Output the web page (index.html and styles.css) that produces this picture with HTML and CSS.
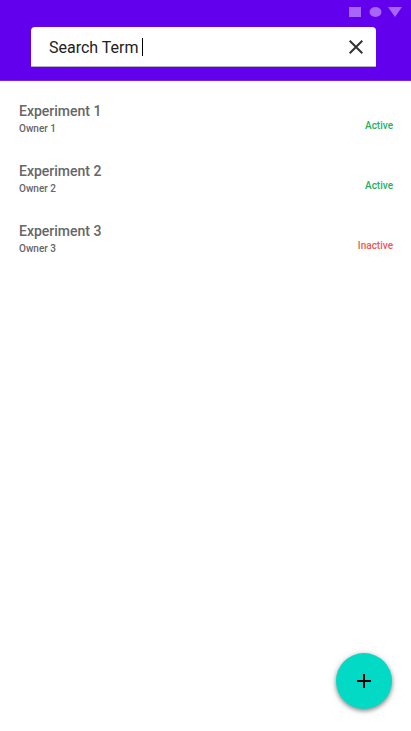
FILE: index.html
```html
<!DOCTYPE html>
<html lang="en">
<head>
<meta charset="utf-8">
<meta name="viewport" content="width=device-width, initial-scale=1">
<title>Experiments</title>
<link rel="stylesheet" href="styles.css">
</head>
<body>
<header class="app-bar">
  <div class="status-bar">
    <svg width="54" height="12" viewBox="0 0 54 12" fill="currentColor" aria-hidden="true">
      <path d="M0 1h12v10H0z"/>
      <ellipse cx="26.5" cy="6" rx="6" ry="5"/>
      <path d="M39 1h14l-7 10z"/>
    </svg>
  </div>
  <form class="search" role="search">
    <input class="search-input" type="text" value="Search Term" aria-label="Search experiments">
    <span class="caret"></span>
    <button class="clear" type="button" aria-label="Clear search">
      <svg width="14" height="14" viewBox="0 0 14 14" fill="none" stroke="currentColor" stroke-width="2" aria-hidden="true">
        <path d="M.7.7l12.6 12.6M13.3.7L.7 13.3"/>
      </svg>
    </button>
  </form>
</header>
<main>
  <ul class="list">
    <li class="item">
      <div><h2 class="title">Experiment 1</h2><p class="owner">Owner 1</p></div>
      <span class="status active">Active</span>
    </li>
    <li class="item">
      <div><h2 class="title">Experiment 2</h2><p class="owner">Owner 2</p></div>
      <span class="status active">Active</span>
    </li>
    <li class="item">
      <div><h2 class="title">Experiment 3</h2><p class="owner">Owner 3</p></div>
      <span class="status inactive">Inactive</span>
    </li>
  </ul>
</main>
<button class="fab" type="button" aria-label="Add experiment">
  <svg width="14" height="14" viewBox="0 0 14 14" fill="none" stroke="currentColor" stroke-width="2" aria-hidden="true">
    <path d="M7 0v14M0 7h14"/>
  </svg>
</button>
</body>
</html>
```
FILE: styles.css
```css
* {
  box-sizing: border-box;
}

body {
  margin: 0;
  background: #fff;
  font-family: Roboto, sans-serif;
}

.app-bar {
  padding-bottom: 13px;
  background: #6200ee;
  border-bottom: 1px solid #7822f0;
}

.status-bar {
  display: flex;
  align-items: center;
  justify-content: flex-end;
  height: 24px;
  padding-right: 8px;
  color: #a766f5;
}

.search {
  display: flex;
  align-items: center;
  height: 40px;
  margin: 3px 35px 0 31px;
  padding: 1px 12px 0 18px;
  background: #fff;
  border-bottom: 1px solid #b5b0bd;
  border-radius: 4px 4px 0 0;
}

.search-input {
  field-sizing: content;
  min-width: 0;
  padding: 2px 1px 0 0;
  border: 0;
  outline: 0;
  background: none;
  font: 400 16px/24px Roboto, sans-serif;
  color: #212121;
}

.caret {
  width: 1px;
  height: 18px;
  margin-left: 2px;
  background: #000;
}

.clear {
  display: flex;
  margin-left: auto;
  padding: 1px;
  border: 0;
  background: none;
  color: #333;
}

.list {
  margin: 0;
  padding: 0;
  list-style: none;
}

.item {
  display: flex;
  align-items: flex-end;
  justify-content: space-between;
  min-height: 60px;
  padding: 20px 18px 4px 19px;
}

.title {
  margin: 0;
  font-size: 14px;
  font-weight: 500;
  line-height: 20px;
  color: #666;
}

.owner {
  margin: 0;
  font-size: 10px;
  font-weight: 500;
  line-height: 16px;
  color: #666;
}

.status {
  padding-bottom: 3px;
  font-size: 10px;
  font-weight: 500;
  line-height: 16px;
}

.active {
  color: #27ae60;
}

.inactive {
  color: #eb5757;
}

.fab {
  position: fixed;
  right: 19px;
  bottom: 22px;
  display: flex;
  align-items: center;
  justify-content: center;
  width: 56px;
  height: 56px;
  padding: 0;
  border: 0;
  border-radius: 50%;
  background: #03dac5;
  box-shadow: 0 2px 4px rgba(0, 0, 0, .4), 0 1px 8px rgba(0, 0, 0, .15);
  color: #000;
}
```
